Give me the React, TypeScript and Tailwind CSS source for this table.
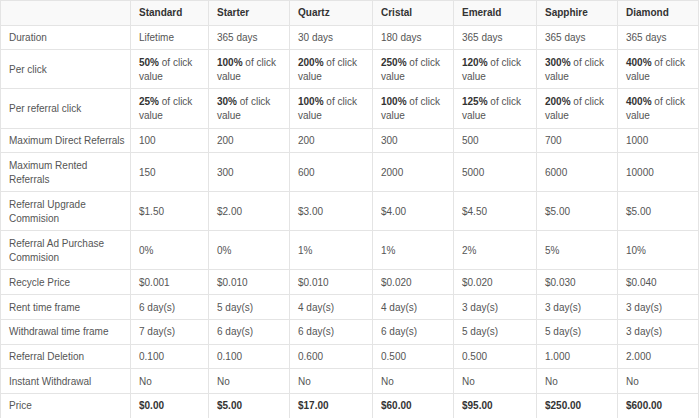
import React from 'react';

type Cell = string | { b: string; rest?: string };

const plans = ['Standard', 'Starter', 'Quartz', 'Cristal', 'Emerald', 'Sapphire', 'Diamond'];
const widths = [130, 78, 81, 83, 81, 83, 81, 81];

const pct = (b: string): Cell => ({ b, rest: ' of click value' });

const rows: { label: string; cells: Cell[]; bold?: boolean }[] = [
  { label: 'Duration', cells: ['Lifetime', '365 days', '30 days', '180 days', '365 days', '365 days', '365 days'] },
  { label: 'Per click', cells: ['50%', '100%', '200%', '250%', '120%', '300%', '400%'].map(pct) },
  { label: 'Per referral click', cells: ['25%', '30%', '100%', '100%', '125%', '200%', '400%'].map(pct) },
  { label: 'Maximum Direct Referrals', cells: ['100', '200', '200', '300', '500', '700', '1000'] },
  { label: 'Maximum Rented Referrals', cells: ['150', '300', '600', '2000', '5000', '6000', '10000'] },
  { label: 'Referral Upgrade Commision', cells: ['$1.50', '$2.00', '$3.00', '$4.00', '$4.50', '$5.00', '$5.00'] },
  { label: 'Referral Ad Purchase Commision', cells: ['0%', '0%', '1%', '1%', '2%', '5%', '10%'] },
  { label: 'Recycle Price', cells: ['$0.001', '$0.010', '$0.010', '$0.020', '$0.020', '$0.030', '$0.040'] },
  { label: 'Rent time frame', cells: ['6 day(s)', '5 day(s)', '4 day(s)', '4 day(s)', '3 day(s)', '3 day(s)', '3 day(s)'] },
  { label: 'Withdrawal time frame', cells: ['7 day(s)', '6 day(s)', '6 day(s)', '6 day(s)', '5 day(s)', '5 day(s)', '3 day(s)'] },
  { label: 'Referral Deletion', cells: ['0.100', '0.100', '0.600', '0.500', '0.500', '1.000', '2.000'] },
  { label: 'Instant Withdrawal', cells: ['No', 'No', 'No', 'No', 'No', 'No', 'No'] },
  { label: 'Price', cells: ['$0.00', '$5.00', '$17.00', '$60.00', '$95.00', '$250.00', '$600.00'], bold: true },
];

const td = 'border border-[#e4e4e4] pl-[8px] pr-[2px] pt-[5.4px] pb-[4px] align-middle text-left';

export default function App() {
  return (
    <div className="w-[700px] h-[418px] bg-white overflow-hidden font-['Liberation_Sans',Arial,sans-serif] text-[10px] leading-[14.33px] text-[#555]">
      <table className="table-fixed border-collapse w-[698px]">
        <colgroup>
          {widths.map((w, i) => (
            <col key={i} style={{ width: w }} />
          ))}
        </colgroup>
        <thead>
          <tr className="bg-[#f9f9f9]">
            <th className={td}></th>
            {plans.map((p) => (
              <th key={p} className={`${td} font-bold text-[#333]`}>
                {p}
              </th>
            ))}
          </tr>
        </thead>
        <tbody>
          {rows.map((r) => (
            <tr key={r.label}>
              <td className={`${td} ${r.label === 'Maximum Direct Referrals' ? 'whitespace-nowrap' : ''}`}>{r.label}</td>
              {r.cells.map((c, i) => (
                <td key={i} className={`${td} ${r.bold ? 'font-bold text-[#333]' : ''}`}>
                  {typeof c === 'string' ? (
                    c
                  ) : (
                    <>
                      <b className="font-bold text-[#333]">{c.b}</b>
                      {c.rest}
                    </>
                  )}
                </td>
              ))}
            </tr>
          ))}
        </tbody>
      </table>
    </div>
  );
}
